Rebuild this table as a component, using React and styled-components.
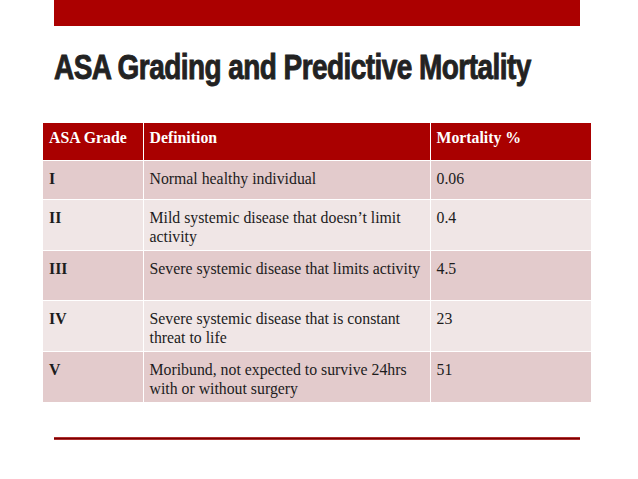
import React from "react";
import styled, { createGlobalStyle } from "styled-components";

const Global = createGlobalStyle`
  html, body { margin: 0; padding: 0; background: #ffffff; }
  body { width: 638px; height: 479px; overflow: hidden; }
`;

const Slide = styled.div`
  width: 638px;
  height: 479px;
  display: flex;
  flex-direction: column;
  background: #ffffff;
`;

const TopBar = styled.div`
  margin-left: 54px;
  width: 526px;
  height: 26px;
  background: #ab0000;
`;

const Title = styled.h1`
  margin: 20px 0 0 54px;
  height: 42px;
  font-family: "Liberation Sans", Arial, sans-serif;
  font-weight: 700;
  font-size: 35px;
  line-height: 42px;
  color: #222222;
  white-space: nowrap;
  letter-spacing: -0.7px;
  -webkit-text-stroke: 0.9px #222222;
  transform: scaleX(0.8);
  transform-origin: left center;
`;

const Table = styled.table`
  margin: 35px 0 0 43px;
  width: 548px;
  border-collapse: collapse;
  table-layout: fixed;
  font-family: "Liberation Serif", "Times New Roman", serif;
  font-size: 15.8px;
  color: #1c1c1c;
`;

const Row = styled.tr`
  height: ${(p) => p.$h}px;
  background: ${(p) => (p.$head ? "#a90000" : p.$odd ? "#e3cbcc" : "#f0e6e6")};
`;

const Cell = styled.td`
  vertical-align: top;
  padding: ${(p) => (p.$head ? "5px" : "8px")} 4px 0 6px;
  line-height: 19px;
  border: 1px solid #ffffff;
  border-top: ${(p) => (p.$head ? "none" : "1px solid #ffffff")};
  font-weight: ${(p) => (p.$bold ? 700 : 400)};
  color: ${(p) => (p.$head ? "#ffffff" : "#1c1c1c")};
  &:first-child { border-left: none; }
  &:last-child { border-right: none; }
`;

const BottomRule = styled.div`
  margin: 34px 0 0 54px;
  width: 526px;
  height: 3px;
  background: linear-gradient(#c84545, #7a0000 50%, #c84545);
`;

const rows = [
  { g: "I", d: "Normal healthy individual", m: "0.06", h: 39 },
  { g: "II", d: "Mild systemic disease that doesn’t limit activity", m: "0.4", h: 51 },
  { g: "III", d: "Severe systemic disease that limits activity", m: "4.5", h: 50 },
  { g: "IV", d: "Severe systemic disease that is constant threat to life", m: "23", h: 51 },
  { g: "V", d: "Moribund, not expected to survive 24hrs with or without surgery", m: "51", h: 51 },
];

export default function App() {
  return (
    <>
      <Global />
      <Slide>
        <TopBar />
        <Title>ASA Grading and Predictive Mortality</Title>
        <Table>
          <colgroup>
            <col style={{ width: "100px" }} />
            <col style={{ width: "287px" }} />
            <col style={{ width: "161px" }} />
          </colgroup>
          <tbody>
            <Row $head $h={37}>
              <Cell $head $bold>ASA Grade</Cell>
              <Cell $head $bold>Definition</Cell>
              <Cell $head $bold>Mortality %</Cell>
            </Row>
            {rows.map((r, i) => (
              <Row key={r.g} $odd={i % 2 === 0} $h={r.h}>
                <Cell $bold>{r.g}</Cell>
                <Cell>{r.d}</Cell>
                <Cell>{r.m}</Cell>
              </Row>
            ))}
          </tbody>
        </Table>
        <BottomRule />
      </Slide>
    </>
  );
}
